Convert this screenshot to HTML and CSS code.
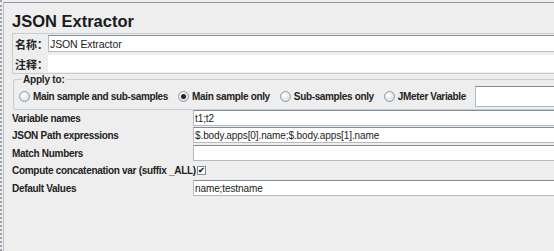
FILE: index.html
```html
<!DOCTYPE html>
<html lang="zh-CN">
<head>
  <meta charset="UTF-8" />
  <title>JSON Extractor</title>
  <link rel="stylesheet" href="styles.css">
</head>
<body>
  <div class="frame">
    <div class="panel">
      <h1 class="title">JSON Extractor</h1>

      <div class="names">
        <div class="name-row">
          <label class="cjk">名称：</label>
          <input class="field" type="text" value="JSON Extractor">
        </div>
        <div class="name-row">
          <label class="cjk">注释：</label>
          <input class="field" type="text" value="">
        </div>
      </div>

      <fieldset class="apply">
        <legend>Apply to:</legend>
        <div class="radios">
          <span class="radio"><span class="dot"></span>Main sample and sub-samples</span>
          <span class="radio on"><span class="dot"></span>Main sample only</span>
          <span class="radio"><span class="dot"></span>Sub-samples only</span>
          <span class="radio"><span class="dot"></span>JMeter Variable</span>
          <input class="field var" type="text" value="">
        </div>
      </fieldset>

      <div class="form">
        <label>Variable names</label>
        <input class="field" type="text" value="t1;t2">
        <label>JSON Path expressions</label>
        <input class="field" type="text" value="$.body.apps[0].name;$.body.apps[1].name">
        <label>Match Numbers</label>
        <input class="field" type="text" value="">
        <label>Compute concatenation var (suffix _ALL)</label>
        <span class="check"><span class="box">&#10004;</span></span>
        <label>Default Values</label>
        <input class="field" type="text" value="name;testname">
      </div>
    </div>
  </div>
</body>
</html>
```

FILE: styles.css
```css
* { margin: 0; padding: 0; box-sizing: border-box; }
html, body { height: 100%; background: #eeeeee; font-family: "Liberation Sans", Arial, sans-serif; color: #222; overflow: hidden; }

.frame {
  height: 100%;
  padding-top: 2px;
  border-left: 2px dotted #9aa0a8;
}
.panel {
  height: 100%;
  margin-left: 1px;
  border-top: 1px solid #8a9aab;
  border-left: 1px solid #b8bec6;
  padding: 9px 0 0 8px;
}

.title {
  font-size: 16.5px;
  font-weight: bold;
  line-height: 19px;
  color: #1a1a1a;
  margin-bottom: 2px;
}

.names {
  border: 1px solid #c9ccd1;
  border-right: none;
  padding: 1px 0 1px 1px;
  display: flex;
  flex-direction: column;
  gap: 3px;
}
.name-row { display: flex; align-items: center; }
.cjk {
  font-family: "Liberation Sans", "Noto Sans CJK SC", sans-serif;
  font-size: 11px;
  font-weight: bold;
  white-space: nowrap;
  flex: 0 0 34px;
  padding-left: 1px;
}
.name-row:last-child .cjk { flex-basis: 29px; }
.name-row .field { flex: 1; min-width: 0; height: 17px; font-size: 10.5px; }
.name-row:last-child .field { border-color: #fff; }

.field {
  height: 16px;
  border: 1px solid #b3bac3;
  border-top-color: #7f8c99;
  border-right: none;
  background: #fff;
  font-family: "Liberation Sans", Arial, sans-serif;
  font-size: 10px;
  letter-spacing: -0.1px;
  color: #222;
  padding: 0 1px;
  outline: none;
}

.apply {
  min-width: 0;
  margin-left: 1px;
  border: 1px solid #c9ccd1;
  border-right: none;
  border-radius: 3px 0 0 3px;
  padding: 0 0 2px 5px;
}
.apply legend {
  font-size: 10px;
  letter-spacing: -0.2px;
  font-weight: bold;
  padding: 0 1px;
  margin-left: 3px;
}
.radios {
  display: flex;
  align-items: center;
  height: 22px;
  font-size: 10px;
  letter-spacing: -0.35px;
  font-weight: bold;
  white-space: nowrap;
}
.radio { display: flex; align-items: center; flex: 0 0 auto; margin-right: 10px; }
.dot {
  width: 11px;
  height: 11px;
  border-radius: 50%;
  border: 1px solid #8e9aa8;
  background: radial-gradient(circle at 40% 35%, #ffffff, #d6dde6 80%);
  margin-right: 3px;
  display: flex;
  align-items: center;
  justify-content: center;
}
.radio.on .dot::after {
  content: "";
  width: 5px;
  height: 5px;
  border-radius: 50%;
  background: #222;
}
.radios .var { flex: 1; min-width: 0; height: 21px; margin-left: -1px; }

.form {
  display: grid;
  grid-template-columns: 181px 1fr;
  grid-template-rows: 16px 17px 16px 17px 16px;
  row-gap: 1px;
  font-size: 10px;
  letter-spacing: -0.3px;
  font-weight: bold;
}
.form label { display: flex; align-items: center; white-space: nowrap; }
.form .field { align-self: start; }
.check { display: flex; align-items: center; padding-left: 4px; }
.box {
  width: 9px;
  height: 9px;
  border: 1px solid #7f8c99;
  background: #fff;
  font-size: 8px;
  line-height: 8px;
  letter-spacing: 0;
  text-align: center;
  color: #222;
}
```
